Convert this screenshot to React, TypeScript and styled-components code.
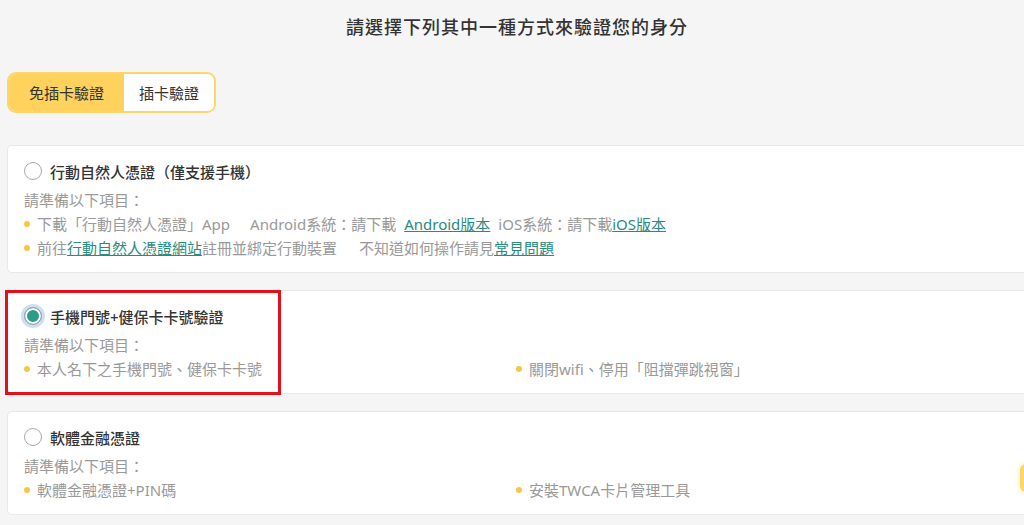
import React, { useState } from 'react';
import styled, { createGlobalStyle } from 'styled-components';

const GlobalStyle = createGlobalStyle`
  html, body {
    margin: 0;
    padding: 0;
    background: #f5f5f5;
    overflow: hidden;
  }
  body {
    font-family: "Noto Sans", "Noto Sans CJK TC", sans-serif;
    color: #333;
  }
`;

const Page = styled.div`
  box-sizing: border-box;
  width: 1040px;
  padding: 13px 0 0 7px;
  display: flex;
  flex-direction: column;
`;

const Heading = styled.h1`
  margin: 0 0 0 -2px;
  width: 1024px;
  text-align: center;
  font-size: 18px;
  letter-spacing: 1px;
  font-weight: 500;
  line-height: 28px;
  color: #333;
`;

const Switch = styled.div`
  margin-top: 31px;
  align-self: flex-start;
  display: flex;
  height: 41px;
  box-sizing: border-box;
  border: 2px solid #fcd66b;
  border-radius: 9px;
  overflow: hidden;
  background: #fff;
`;

const SwitchButton = styled.button<{ $active: boolean }>`
  border: 0;
  margin: 0;
  padding: 0 ${({ $active }) => ($active ? '20px' : '15px')};
  font-family: inherit;
  font-size: 15px;
  color: #333;
  background: ${({ $active }) => ($active ? '#fed25c' : '#fff')};
  cursor: pointer;
`;

const List = styled.div`
  margin-top: 32px;
  display: flex;
  flex-direction: column;
  gap: 17px;
`;

const Card = styled.label`
  position: relative;
  box-sizing: border-box;
  display: flex;
  flex-direction: column;
  padding: 12px 16px 12px;
  background: #fff;
  border: 1px solid #e8e8e8;
  border-radius: 5px;
  cursor: pointer;
`;

const TitleRow = styled.div`
  display: flex;
  align-items: center;
  gap: 8px;
  height: 26px;
  margin-bottom: 4px;
  font-size: 15px;
  font-weight: 500;
  color: #333;
`;

const Radio = styled.span<{ $checked: boolean }>`
  box-sizing: border-box;
  width: 18px;
  height: 18px;
  border-radius: 50%;
  border: 1.5px solid ${({ $checked }) => ($checked ? '#9aa3ad' : '#a8a8a8')};
  background: ${({ $checked }) => ($checked ? '#2a9d8a' : '#fff')};
  box-shadow: ${({ $checked }) =>
    $checked ? 'inset 0 0 0 2px #fff, 0 0 0 3px rgba(120, 160, 220, 0.35)' : 'none'};
  flex-shrink: 0;
`;

const Line = styled.div`
  font-size: 15px;
  line-height: 24px;
  color: #999;
  white-space: nowrap;
`;

const Items = styled.div<{ $cols: number }>`
  display: grid;
  grid-template-columns: ${({ $cols }) => ($cols === 2 ? '492px 1fr' : '1fr')};
`;

const Item = styled(Line)`
  display: flex;
  align-items: center;
  &::before {
    content: '';
    width: 6px;
    height: 6px;
    border-radius: 50%;
    background: #f6c744;
    margin: 0 7px 0 0;
    flex-shrink: 0;
  }
`;

const Link = styled.a`
  color: #2a8a7e;
  text-decoration: underline;
`;

const Gap = styled.span<{ $w: number }>`
  display: inline-block;
  width: ${({ $w }) => $w}px;
`;

const Highlight = styled.div`
  position: absolute;
  left: -3px;
  top: -1px;
  width: 276px;
  height: 105px;
  box-sizing: border-box;
  border: 3px solid #e3101b;
  pointer-events: none;
`;

const FloatTab = styled.div`
  position: fixed;
  right: -12px;
  top: 464px;
  width: 16px;
  height: 28px;
  border-radius: 6px;
  background: #fcd66b;
  box-shadow: 0 0 6px rgba(252, 214, 107, 0.6);
`;

type Method = {
  id: string;
  title: string;
  items: React.ReactNode[];
  cols: number;
};

const methods: Method[] = [
  {
    id: 'mobile',
    title: '行動自然人憑證（僅支援手機）',
    cols: 1,
    items: [
      <>
        下載「行動自然人憑證」App<Gap $w={20} />Android系統：請下載<Gap $w={8} />
        <Link>Android版本</Link>
        <Gap $w={8} />iOS系統：請下載<Link>iOS版本</Link>
      </>,
      <>
        前往<Link>行動自然人憑證網站</Link>註冊並綁定行動裝置<Gap $w={22} />
        不知道如何操作請見<Link>常見問題</Link>
      </>,
    ],
  },
  {
    id: 'phone',
    title: '手機門號+健保卡卡號驗證',
    cols: 2,
    items: ['本人名下之手機門號、健保卡卡號', '關閉wifi、停用「阻擋彈跳視窗」'],
  },
  {
    id: 'soft',
    title: '軟體金融憑證',
    cols: 2,
    items: ['軟體金融憑證+PIN碼', '安裝TWCA卡片管理工具'],
  },
];

export default function App() {
  const [mode, setMode] = useState<'free' | 'card'>('free');
  const [selected, setSelected] = useState('phone');

  return (
    <>
      <GlobalStyle />
      <Page>
        <Heading>請選擇下列其中一種方式來驗證您的身分</Heading>
        <Switch>
          <SwitchButton $active={mode === 'free'} onClick={() => setMode('free')}>
            免插卡驗證
          </SwitchButton>
          <SwitchButton $active={mode === 'card'} onClick={() => setMode('card')}>
            插卡驗證
          </SwitchButton>
        </Switch>
        <List>
          {methods.map((method) => (
            <Card key={method.id} onClick={() => setSelected(method.id)}>
              <TitleRow>
                <Radio $checked={selected === method.id} />
                {method.title}
              </TitleRow>
              <Line>請準備以下項目：</Line>
              <Items $cols={method.cols}>
                {method.items.map((item, index) => (
                  <Item key={index}>{item}</Item>
                ))}
              </Items>
              {method.id === 'phone' && <Highlight />}
            </Card>
          ))}
        </List>
      </Page>
      <FloatTab />
    </>
  );
}
